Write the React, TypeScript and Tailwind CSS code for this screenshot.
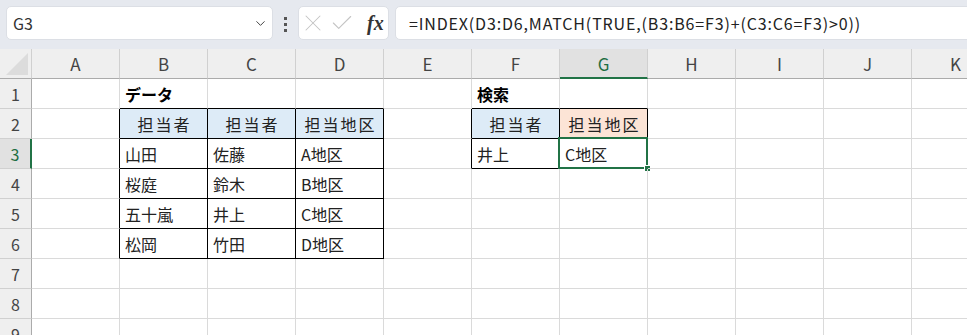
import { ChevronDown, X, Check } from "lucide-react";

const COLS = ["A", "B", "C", "D", "E", "F", "G", "H", "I", "J", "K"];
const ROWS = [1, 2, 3, 4, 5, 6, 7, 8, 9];

type Cell = {
    text?: string;
    bold?: boolean;
    head?: boolean;
    bg?: string;
};

const HEAD_BLUE = "bg-[#ddebf7]";
const HEAD_ORANGE = "bg-[#fce4d6]";

const cells: Record<string, Cell> = {
    B1: { text: "データ", bold: true },
    B2: { text: "担当者", head: true, bg: HEAD_BLUE },
    C2: { text: "担当者", head: true, bg: HEAD_BLUE },
    D2: { text: "担当地区", head: true, bg: HEAD_BLUE },
    B3: { text: "山田" },
    C3: { text: "佐藤" },
    D3: { text: "A地区" },
    B4: { text: "桜庭" },
    C4: { text: "鈴木" },
    D4: { text: "B地区" },
    B5: { text: "五十嵐" },
    C5: { text: "井上" },
    D5: { text: "C地区" },
    B6: { text: "松岡" },
    C6: { text: "竹田" },
    D6: { text: "D地区" },
    F1: { text: "検索", bold: true },
    F2: { text: "担当者", head: true, bg: HEAD_BLUE },
    G2: { text: "担当地区", head: true, bg: HEAD_ORANGE },
    F3: { text: "井上" },
    G3: { text: "C地区" },
};

// black table borders: cells inside the tables plus their left/top neighbours
function inTable(c: string, r: number) {
    return (["B", "C", "D"].includes(c) && r >= 2 && r <= 6) || (["F", "G"].includes(c) && r >= 2 && r <= 3);
}

function borderClasses(c: string, r: number) {
    const ci = COLS.indexOf(c);
    const next = COLS[ci + 1];
    const right = inTable(c, r) || (next !== undefined && inTable(next, r));
    const bottom = inTable(c, r) || inTable(c, r + 1);
    return [right ? "border-r-black" : "border-r-[#dadada]", bottom ? "border-b-black" : "border-b-[#dadada]"].join(" ");
}

function NameBox() {
    return (
        <div className="ml-[6px] flex h-[34px] w-[267px] items-center justify-between rounded-[5px] border border-[#dcdfe5] bg-white pl-[6px] pr-[4px]">
            <span className="text-[16px] text-[#333]">G3</span>
            <ChevronDown className="h-[15px] w-[15px] text-[#444]" strokeWidth={1.6} />
        </div>
    );
}

function FxBox() {
    return (
        <div className="flex h-[34px] w-[91px] items-center rounded-[5px] border border-[#dcdfe5] bg-white">
            <X className="h-[28px] w-[28px] text-[#c4c4c4]" strokeWidth={0.9} />
            <Check className="ml-[2px] h-[26px] w-[26px] text-[#c4c4c4]" strokeWidth={1} />
            <span className="ml-[12px] font-['Liberation_Serif',serif] text-[20px] font-bold italic text-[#333]">fx</span>
        </div>
    );
}

export default function App() {
    return (
        <div className="h-[335px] w-[967px] overflow-hidden bg-white font-['Noto_Sans_CJK_JP',sans-serif] text-[#222]">
            {/* formula bar */}
            <div className="flex h-[49px] items-start bg-[#e6e9ef] pt-[6px]">
                <NameBox />
                <div className="ml-[11px] mr-[11px] mt-[11px] flex flex-col gap-[3px]">
                    <span className="h-[3px] w-[3px] bg-[#555]" />
                    <span className="h-[3px] w-[3px] bg-[#555]" />
                    <span className="h-[3px] w-[3px] bg-[#555]" />
                </div>
                <FxBox />
                <div className="ml-[6px] mr-[-20px] flex h-[34px] flex-1 items-center rounded-[5px] border border-[#dcdfe5] bg-white pl-[13px]">
                    <span className="text-[16px] tracking-[0.85px] text-[#222]">=INDEX(D3:D6,MATCH(TRUE,(B3:B6=F3)+(C3:C6=F3)&gt;0))</span>
                </div>
            </div>

            {/* column headers */}
            <div className="flex h-[30px]">
                <div className="relative h-[30px] w-[32px] shrink-0 border-b border-r border-b-[#ababab] border-r-[#d0d0d0] bg-[#efefef]">
                    <svg className="absolute bottom-[3px] right-[3px]" width="22" height="22" viewBox="0 0 22 22">
                        <path d="M22 0 L22 22 L0 22 Z" fill="#dcdcdc" />
                    </svg>
                </div>
                {COLS.map((c) =>
                    c === "G" ? (
                        <div
                            key={c}
                            className="flex h-[30px] w-[88px] shrink-0 items-center justify-center border-b-2 border-r border-b-[#217346] border-r-[#d0d0d0] bg-[#e1e1e1] pt-[1px] text-[17px] text-[#1e6e42]"
                        >
                            {c}
                        </div>
                    ) : (
                        <div
                            key={c}
                            className="flex h-[30px] w-[88px] shrink-0 items-center justify-center border-b border-r border-b-[#ababab] border-r-[#d0d0d0] bg-[#efefef] text-[17px] text-[#444]"
                        >
                            {c}
                        </div>
                    )
                )}
            </div>

            {/* rows */}
            {ROWS.map((r) => (
                <div key={r} className="flex h-[30px]">
                    {r === 3 ? (
                        <div className="flex h-[30px] w-[32px] shrink-0 items-center justify-center border-b border-r-2 border-b-[#d0d0d0] border-r-[#217346] bg-[#e1e1e1] text-[16px] text-[#1e6e42]">
                            {r}
                        </div>
                    ) : (
                        <div className="flex h-[30px] w-[32px] shrink-0 items-center justify-center border-b border-r border-b-[#d0d0d0] border-r-[#ababab] bg-[#efefef] text-[16px] text-[#444]">
                            {r}
                        </div>
                    )}
                    {COLS.map((c) => {
                        const cell = cells[c + r];
                        const selected = c === "G" && r === 3;
                        return (
                            <div
                                key={c}
                                className={`relative flex h-[30px] w-[88px] shrink-0 items-center border-b border-r ${borderClasses(c, r)} ${cell?.bg ?? ""} ${
                                    cell?.head ? "justify-center pl-[2px] tracking-[2px]" : "pl-[5px]"
                                }`}
                            >
                                {cell?.text && (
                                    <span className={`whitespace-nowrap text-[16px] ${cell.bold ? "font-bold text-black" : ""}`}>{cell.text}</span>
                                )}
                                {selected && (
                                    <>
                                        <div className="absolute -left-[2px] -top-[2px] bottom-[-1px] right-[-1px] border-2 border-[#217346]" />
                                        <div className="absolute bottom-[-4px] right-[-4px] h-[7px] w-[7px] border border-white bg-[#217346]" />
                                    </>
                                )}
                            </div>
                        );
                    })}
                </div>
            ))}
        </div>
    );
}
